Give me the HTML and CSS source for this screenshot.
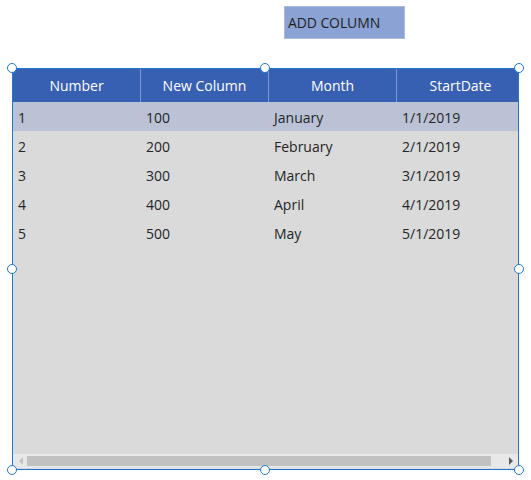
FILE: index.html
```html
<!DOCTYPE html>
<html>
<head>
<meta charset="utf-8">
<link rel="stylesheet" href="styles.css">
</head>
<body>
<div class="page">
  <div class="toolbar">
    <button class="add-btn">ADD COLUMN</button>
  </div>
  <div class="frame">
    <div class="table">
      <div class="head">
        <div class="hcell">Number</div>
        <div class="hcell">New Column</div>
        <div class="hcell">Month</div>
        <div class="hcell last">StartDate</div>
      </div>
      <div class="body">
        <div class="row selected"><div class="cell">1</div><div class="cell">100</div><div class="cell">January</div><div class="cell">1/1/2019</div></div>
        <div class="row"><div class="cell">2</div><div class="cell">200</div><div class="cell">February</div><div class="cell">2/1/2019</div></div>
        <div class="row"><div class="cell">3</div><div class="cell">300</div><div class="cell">March</div><div class="cell">3/1/2019</div></div>
        <div class="row"><div class="cell">4</div><div class="cell">400</div><div class="cell">April</div><div class="cell">4/1/2019</div></div>
        <div class="row"><div class="cell">5</div><div class="cell">500</div><div class="cell">May</div><div class="cell">5/1/2019</div></div>
      </div>
      <div class="scrollbar">
        <span class="arrow left"></span>
        <div class="thumb"></div>
        <span class="arrow right"></span>
      </div>
    </div>
    <span class="handle h-tl"></span>
    <span class="handle h-tm"></span>
    <span class="handle h-tr"></span>
    <span class="handle h-ml"></span>
    <span class="handle h-mr"></span>
    <span class="handle h-bl"></span>
    <span class="handle h-bm"></span>
    <span class="handle h-br"></span>
  </div>
</div>
</body>
</html>
```

FILE: styles.css
```css
html, body {
  margin: 0;
  padding: 0;
  background: #ffffff;
}
body {
  font-family: "Open Sans", "Noto Sans", sans-serif;
  width: 531px;
  height: 480px;
  overflow: hidden;
}
.page {
  display: flex;
  flex-direction: column;
}
.toolbar {
  display: flex;
  padding-left: 284px;
  padding-top: 6px;
}
.add-btn {
  box-sizing: border-box;
  width: 121px;
  height: 33px;
  margin: 0;
  padding: 0 0 0 3px;
  border: 1px solid #a9bbe2;
  background: #8aa2d4;
  color: #1f1f1f;
  font-family: "Open Sans", "Noto Sans", sans-serif;
  font-size: 14px;
  text-align: left;
  letter-spacing: -0.1px;
}
.frame {
  position: relative;
  box-sizing: border-box;
  margin-top: 29px;
  margin-left: 12px;
  width: 507px;
  height: 402px;
  border: 1px solid #1d79d2;
}
.table {
  display: flex;
  flex-direction: column;
  height: 100%;
  background: #dadada;
}
.head {
  display: grid;
  grid-template-columns: 128px 128px 128px 1fr;
  height: 33px;
  background: #3860b2;
}
.hcell {
  display: flex;
  align-items: center;
  justify-content: center;
  padding-bottom: 1px;
  color: #ffffff;
  font-size: 14px;
  border-right: 1px solid #7d98d0;
}
.hcell.last {
  border-right: none;
  padding-left: 6px;
}
.body {
  flex: 1;
  display: flex;
  flex-direction: column;
}
.row {
  display: grid;
  grid-template-columns: 128px 128px 128px 1fr;
  height: 29px;
  align-items: center;
}
.row.selected {
  background: #bbc2d5;
}
.cell {
  padding-left: 5px;
  padding-top: 1px;
  font-size: 14px;
  color: #252525;
}
.scrollbar {
  display: flex;
  align-items: center;
  height: 14px;
  background: #e8e8e8;
  margin-bottom: 1px;
}
.thumb {
  height: 10px;
  flex: 1;
  background: #c1c1c1;
  margin: 0 18px 0 4px;
}
.arrow {
  width: 0;
  height: 0;
  border-top: 4px solid transparent;
  border-bottom: 4px solid transparent;
}
.arrow.left {
  margin-left: 6px;
  border-right: 4px solid #c4c4c4;
}
.arrow.right {
  margin-right: 5px;
  border-left: 4px solid #5a5a5a;
}
.handle {
  position: absolute;
  box-sizing: border-box;
  width: 10px;
  height: 10px;
  border-radius: 50%;
  background: #ffffff;
  border: 1.5px solid #1d79d2;
}
.h-tl { left: -6px; top: -6px; }
.h-tm { left: 247px; top: -6px; }
.h-tr { right: -6px; top: -6px; }
.h-ml { left: -6px; top: 195px; }
.h-mr { right: -6px; top: 195px; }
.h-bl { left: -6px; bottom: -6px; }
.h-bm { left: 247px; bottom: -6px; }
.h-br { right: -6px; bottom: -6px; }
```
